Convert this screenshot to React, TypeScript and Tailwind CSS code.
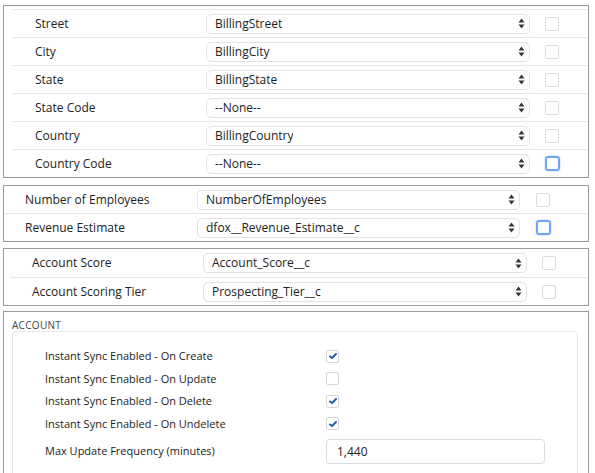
import React from "react";

const font = { fontFamily: '"Open Sans", "Noto Sans", Arial, sans-serif' };

function SortArrows() {
  return (
    <svg width="7" height="11" viewBox="0 0 7 11" className="shrink-0">
      <path d="M3.5 0.5 L6.5 4.5 L0.5 4.5 Z" fill="#333" />
      <path d="M3.5 10.5 L6.5 6.5 L0.5 6.5 Z" fill="#333" />
    </svg>
  );
}

function FakeSelect({ value, width }: { value: string; width: string }) {
  return (
    <div
      className={`${width} h-[20px] flex items-center justify-between pl-[8px] pr-[4px] rounded-[5px] border border-[#e2e2e2] bg-white text-[12px] text-[#222]`}
    >
      <span className="truncate">{value}</span>
      <SortArrows />
    </div>
  );
}

function Box({ focused = false }: { focused?: boolean }) {
  if (focused) {
    return (
      <div className="w-[15px] h-[15px] rounded-[3px] border-2 border-[#6ea6f2] shadow-[0_0_2px_#9cc3f7]" />
    );
  }
  return <div className="w-[14px] h-[14px] rounded-[2px] border border-[#dcdcdc]" />;
}

type MapRow = { label: string; value: string; focused?: boolean };

const address: MapRow[] = [
  { label: "Street", value: "BillingStreet" },
  { label: "City", value: "BillingCity" },
  { label: "State", value: "BillingState" },
  { label: "State Code", value: "--None--" },
  { label: "Country", value: "BillingCountry" },
  { label: "Country Code", value: "--None--", focused: true },
];

const company: MapRow[] = [
  { label: "Number of Employees", value: "NumberOfEmployees" },
  { label: "Revenue Estimate", value: "dfox__Revenue_Estimate__c", focused: true },
];

const scoring: MapRow[] = [
  { label: "Account Score", value: "Account_Score__c" },
  { label: "Account Scoring Tier", value: "Prospecting_Tier__c" },
];

const syncRows = [
  { label: "Instant Sync Enabled - On Create", checked: true },
  { label: "Instant Sync Enabled - On Update", checked: false },
  { label: "Instant Sync Enabled - On Delete", checked: true },
  { label: "Instant Sync Enabled - On Undelete", checked: true },
];

function CheckBox({ checked }: { checked: boolean }) {
  return (
    <div className="w-[13px] h-[13px] rounded-[2px] border border-[#d6d6d6] bg-white flex items-center justify-center">
      {checked && (
        <svg width="8" height="6" viewBox="0 0 8 6">
          <path d="M1 3.4 L3 5 L7 1" fill="none" stroke="#1f5aa6" strokeWidth="1.9" strokeLinecap="round" strokeLinejoin="round" />
        </svg>
      )}
    </div>
  );
}

export default function App() {
  return (
    <div className="w-[595px] h-[473px] bg-white overflow-hidden text-[#222]" style={font}>
      {/* address mapping */}
      <div className="ml-[3px] mt-[5px] w-[586px] border border-[#9a9a9a] pt-[3px]">
        <div className="ml-[8px]">
          {address.map((r) => (
            <div key={r.label} className="h-[28px] border-t border-[#e6e6e6] flex items-center">
              <div className="w-[194px] pl-[23px] text-[12px]">{r.label}</div>
              <FakeSelect value={r.value} width="w-[324px]" />
              <div className="ml-[15px]">
                <Box focused={r.focused} />
              </div>
            </div>
          ))}
        </div>
      </div>

      {/* company info */}
      <div className="ml-[3px] mt-[7px] w-[586px] border border-[#9a9a9a]">
        {company.map((r, i) => (
          <div
            key={r.label}
            className={`flex items-center ${i > 0 ? "border-t border-[#e6e6e6] h-[28px]" : "h-[27px]"}`}
          >
            <div className="w-[193px] pl-[21px] text-[12px]">{r.label}</div>
            <FakeSelect value={r.value} width="w-[323px]" />
            <div className="ml-[16px]">
              <Box focused={r.focused} />
            </div>
          </div>
        ))}
      </div>

      {/* scoring */}
      <div className="ml-[3px] mt-[6px] w-[586px] border border-[#9a9a9a]">
        <div className="ml-[6px]">
          {scoring.map((r, i) => (
            <div
              key={r.label}
              className={`h-[28px] flex items-center ${i > 0 ? "border-t border-[#e6e6e6]" : ""}`}
            >
              <div className="w-[193px] pl-[22px] text-[12px]">{r.label}</div>
              <FakeSelect value={r.value} width="w-[324px]" />
              <div className="ml-[15px]">
                <Box />
              </div>
            </div>
          ))}
        </div>
      </div>

      {/* account sync settings */}
      <div className="ml-[3px] mt-[5px] w-[586px] h-[200px] border border-[#9a9a9a] px-[8px]">
        <div className="pt-[6px] h-[19px] text-[10px] tracking-[0.3px] text-[#444]">ACCOUNT</div>
        <div className="w-[566px] h-[200px] border border-[#e6e6e6] rounded-[4px] pt-[13px]">
          {syncRows.map((r) => (
            <div key={r.label} className="h-[22.5px] flex items-center">
              <div className="w-[313px] pl-[32px] text-[11px]">{r.label}</div>
              <CheckBox checked={r.checked} />
            </div>
          ))}
          <div className="mt-[4px] h-[25px] flex items-center">
            <div className="w-[313px] pl-[32px] text-[11px]">Max Update Frequency (minutes)</div>
            <div className="w-[219px] h-[25px] rounded-[4px] border border-[#dcdcdc] flex items-center pl-[10px] text-[12px]">
              1,440
            </div>
          </div>
        </div>
      </div>
    </div>
  );
}
